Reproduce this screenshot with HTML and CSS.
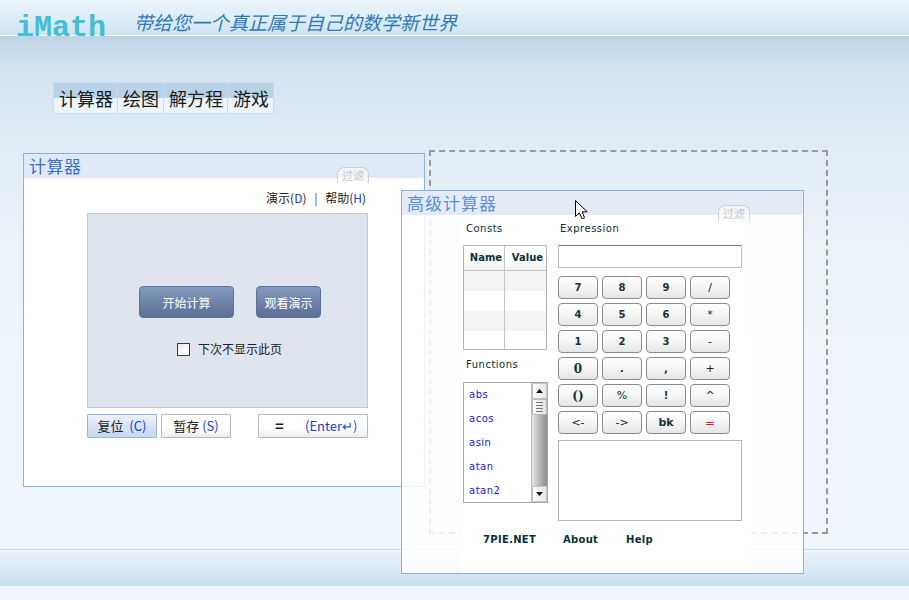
FILE: index.html
```html
<!DOCTYPE html>
<html lang="zh-CN">
<head>
<meta charset="utf-8">
<title>iMath</title>
<link rel="stylesheet" href="styles.css">
</head>
<body>
<header class="top">
  <span class="logo">iMath</span>
  <span class="tagline">带给您一个真正属于自己的数学新世界</span>
</header>
<main class="desk">
  <nav class="tabs">
    <a class="tab">计算器</a><a class="tab">绘图</a><a class="tab">解方程</a><a class="tab">游戏</a>
  </nav>

  <section class="win win-basic">
    <div class="win-title">计算器</div>
    <span class="filter">过滤</span>
    <div class="basic-body">
      <div class="links">演示(<span class="k">D</span>) <span class="sep">|</span> 帮助(<span class="k">H</span>)</div>
      <div class="panel">
        <div class="panel-btns">
          <button class="pbtn pbtn-wide">开始计算</button>
          <button class="pbtn pbtn-narrow">观看演示</button>
        </div>
        <label class="nomore"><span class="chk"></span>下次不显示此页</label>
      </div>
      <div class="basic-actions">
        <button class="abtn abtn-reset">复位 &nbsp;<span class="k">(C)</span></button>
        <button class="abtn">暂存 <span class="k">(S)</span></button>
        <button class="abtn abtn-eq"><b class="eq">=</b><span class="k">(Enter&#8629;)</span></button>
      </div>
    </div>
  </section>

  <div class="dashed"></div>

  <section class="win win-adv">
    <div class="win-title">高级计算器</div>
    <span class="filter">过滤</span>
    <div class="adv-panel">
      <div class="adv-cols">
        <div class="col-left">
          <div class="lbl">Consts</div>
          <div class="consts">
            <div class="crow chead"><span>Name</span><span>Value</span></div>
            <div class="crow alt"><span></span><span></span></div>
            <div class="crow"><span></span><span></span></div>
            <div class="crow alt"><span></span><span></span></div>
            <div class="crow"><span></span><span></span></div>
          </div>
          <div class="lbl lbl-fn">Functions</div>
          <div class="fnlist">
            <ul class="fns">
              <li>abs</li><li>acos</li><li>asin</li><li>atan</li><li>atan2</li>
            </ul>
            <div class="scroll">
              <div class="sb-btn"><svg width="7" height="4" viewBox="0 0 7 4"><path d="M0 4L3.5 0L7 4Z" fill="#111"/></svg></div>
              <div class="sb-track">
                <div class="sb-thumb"><i></i><i></i><i></i><i></i></div>
              </div>
              <div class="sb-btn"><svg width="7" height="4" viewBox="0 0 7 4"><path d="M0 0L3.5 4L7 0Z" fill="#111"/></svg></div>
            </div>
          </div>
        </div>
        <div class="col-right">
          <div class="lbl">Expression</div>
          <div class="expr"></div>
          <div class="keys">
            <button class="key">7</button><button class="key">8</button><button class="key">9</button><button class="key thin">/</button>
            <button class="key">4</button><button class="key">5</button><button class="key">6</button><button class="key thin">*</button>
            <button class="key">1</button><button class="key">2</button><button class="key">3</button><button class="key thin">-</button>
            <button class="key big">0</button><button class="key">.</button><button class="key">,</button><button class="key thin">+</button>
            <button class="key big">()</button><button class="key thin">%</button><button class="key">!</button><button class="key thin">^</button>
            <button class="key thin">&lt;-</button><button class="key thin">-&gt;</button><button class="key bk">bk</button><button class="key red">=</button>
          </div>
          <div class="output"></div>
        </div>
      </div>
      <div class="adv-links"><a class="l1">7PIE.NET</a><a class="l2">About</a><a>Help</a></div>
    </div>
  </section>

  <svg class="cursor" width="13" height="20" viewBox="0 0 13 20">
    <path d="M0.5 0.5 L0.5 16.5 L4.3 12.8 L7 18.8 L9.6 17.7 L7 11.8 L12.2 11.8 Z" fill="#fff" stroke="#000" stroke-width="1" stroke-linejoin="miter"/>
  </svg>
</main>
<footer class="bottom"></footer>
</body>
</html>
```

FILE: styles.css
```css
* { box-sizing: border-box; }
html, body { margin: 0; padding: 0; }
body {
  width: 909px;
  height: 600px;
  overflow: hidden;
  background: #eef5fc;
  font-family: "Noto Sans CJK SC", "Liberation Sans", sans-serif;
  color: #222;
}

/* header */
.top {
  height: 36px;
  display: flex;
  align-items: flex-start;
  background: linear-gradient(#ebf5fb 0%, #dcebf6 60%, #cfe2f1 100%);
  border-bottom: 1px solid #f6fafd;
}
.logo {
  margin: 13px 0 0 16px;
  font-family: "Liberation Mono", monospace;
  font-weight: bold;
  font-size: 30px;
  line-height: 30px;
  color: #42bfd1;
}
.tagline {
  margin: 11px 0 0 28px;
  font-style: italic;
  font-size: 19px;
  line-height: 21px;
  color: #2c7bbb;
}

/* desk */
.desk {
  position: relative;
  height: 513px;
  padding-top: 46px;
  background: linear-gradient(#bdd3e6 0px, #d3e3f0 30px, #e1ecf6 110px, #e9f1f9 200px, #edf4fb 320px, #eef5fc 513px);
}
.tabs {
  display: flex;
  margin-left: 53px;
  height: 32px;
}
.tab {
  display: block;
  height: 32px;
  padding: 0 4px 0 5px;
  border: 1px solid #c5dcec;
  border-left: none;
  background: linear-gradient(#b8d3e8 0%, #b8d3e8 50%, #ecf5fc 50%, #ecf5fc 100%);
  font-size: 18px;
  line-height: 30px;
  color: #1a1a1a;
}
.tab:first-child { border-left: 1px solid #c5dcec; }

/* windows */
.win {
  position: absolute;
  border: 1px solid #8bb1dc;
  display: flex;
  flex-direction: column;
}
.win-title {
  height: 24px;
  padding-left: 5px;
  font-size: 17px;
  line-height: 24px;
  color: #3b6fcd;
  background: #e0e9f6;
  letter-spacing: 0.5px;
}
.filter {
  position: absolute;
  width: 32px;
  height: 16px;
  border: 1px solid #cfcfcf;
  border-bottom: none;
  border-radius: 7px 7px 0 0;
  background: rgba(255, 255, 255, 0.55);
  font-size: 11px;
  line-height: 14px;
  text-align: center;
  color: #c6c6c6;
}

.win-basic {
  left: 23px;
  top: 117px;
  width: 402px;
  height: 334px;
  background: #fff;
  z-index: 1;
}
.win-basic .filter { left: 313px; top: 13px; }
.basic-body {
  padding: 12px 0 0 63px;
}
.links {
  width: 281px;
  height: 16px;
  margin-bottom: 7px;
  padding-right: 2px;
  text-align: right;
  font-size: 12px;
  line-height: 16px;
  color: #222;
}
.links .sep { margin: 0 5px; color: #555; }
.k { color: #1240d8; }
.panel {
  width: 281px;
  height: 195px;
  border: 1px solid #c8c8c8;
  background: #dfe5ee;
  padding: 72px 0 0 51px;
}
.panel-btns {
  display: flex;
  gap: 22px;
}
.pbtn {
  height: 32px;
  border: 1px solid #5d7297;
  border-radius: 4px;
  background: linear-gradient(#8398bd, #5b6f95);
  color: #fff;
  font-family: inherit;
  font-size: 12px;
  padding: 0;
}
.pbtn-wide { width: 95px; }
.pbtn-narrow { width: 65px; }
.nomore {
  display: flex;
  align-items: center;
  margin: 23px 0 0 38px;
  font-size: 12px;
  line-height: 16px;
  color: #222;
}
.chk {
  width: 13px;
  height: 13px;
  margin-right: 8px;
  border: 1px solid #2e3d55;
  background: linear-gradient(135deg, #e8e8e8, #fdfbf6 60%, #fff);
}
.basic-actions {
  display: flex;
  margin-top: 6px;
}
.abtn {
  height: 24px;
  width: 70px;
  margin-right: 4px;
  border: 1px solid #b9b9b9;
  border-radius: 1px;
  background: linear-gradient(#ffffff, #ffffff 60%, #ececec);
  font-family: inherit;
  font-size: 13px;
  line-height: 20px;
  color: #222;
  padding: 0;
}
.abtn-reset {
  border-color: #9cb6d9;
  background: linear-gradient(#edf2fb, #d4e1f4 60%, #c6d6ef);
}
.abtn-eq {
  width: 110px;
  margin-left: 23px;
  display: flex;
  align-items: center;
  padding-left: 16px;
}
.abtn-eq .eq { font-size: 15px; width: 30px; text-align: left; }

/* dashed rectangle */
.dashed {
  position: absolute;
  left: 429px;
  top: 114px;
  width: 399px;
  height: 384px;
  border: 2px dashed #9b9b9b;
  z-index: 2;
}

/* advanced window */
.win-adv {
  left: 401px;
  top: 154px;
  width: 403px;
  height: 384px;
  background: rgba(255, 255, 255, 0.84);
  z-index: 3;
}
.win-adv .win-title {
  background: rgba(224, 233, 246, 0.9);
  color: #5e8fd8;
  font-size: 17px;
  letter-spacing: 1px;
  padding-left: 5px;
}
.win-adv .filter { left: 316px; top: 14px; }
.adv-panel {
  margin-left: 59px;
  width: 290px;
  height: 357px;
  background: #fff;
  padding: 7px 0 0 2px;
  font-family: "DejaVu Sans", "Liberation Sans", sans-serif;
  font-size: 10px;
  color: #0c3038;
}
.adv-cols {
  display: flex;
  gap: 10px;
}
.col-left { width: 85px; }
.col-right { width: 184px; }
.lbl {
  height: 23px;
  padding-left: 3px;
  line-height: 13px;
  letter-spacing: 0.5px;
}
.col-right .lbl { padding-left: 2px; }
.lbl-fn {
  height: 32px;
  line-height: 30px;
  padding-top: 0;
}
.consts {
  width: 84px;
  border: 1px solid #b4b4b4;
}
.crow {
  display: grid;
  grid-template-columns: 41px 1fr;
  height: 20px;
}
.crow span { border-right: 1px solid #c4c4c4; }
.crow span:last-child { border-right: none; }
.crow.alt { background: #f4f4f4; }
.chead {
  height: 25px;
  border-bottom: 1px solid #c4c4c4;
  background: linear-gradient(#ffffff, #ffffff 60%, #efefef);
  font-weight: bold;
  line-height: 24px;
  text-align: center;
}
.chead span { padding-left: 4px; }
.crow:last-child { height: 18px; }

.fnlist {
  display: flex;
  width: 85px;
  height: 121px;
  border: 1px solid #ababab;
}
.fns {
  list-style: none;
  margin: 0;
  padding: 0 0 0 5px;
  flex: 1;
  overflow: hidden;
}
.fns li {
  height: 24px;
  line-height: 24px;
  color: #1414e6;
  letter-spacing: 0.5px;
}
.scroll {
  width: 16px;
  display: flex;
  flex-direction: column;
  border-left: 1px solid #bbb;
}
.sb-btn {
  height: 16px;
  display: flex;
  align-items: center;
  justify-content: center;
  background: linear-gradient(90deg, #fafafa, #e8e8e8);
  border: 1px solid #c4c4c4;
}
.sb-track {
  flex: 1;
  background: linear-gradient(90deg, #e6e6e6, #c0c0c0 40%, #8e8e8e 100%);
}
.sb-thumb {
  height: 16px;
  background: linear-gradient(90deg, #fdfdfd, #e4e4e4);
  border: 1px solid #b8b8b8;
  border-radius: 2px;
  display: flex;
  flex-direction: column;
  justify-content: center;
  gap: 2px;
  padding: 0 3px;
}
.sb-thumb i { display: block; height: 1px; background: #777; }

.expr {
  height: 23px;
  border: 1px solid #bdbdbd;
  border-top-color: #7a7a7a;
  background: #fff;
}
.keys {
  margin-top: 8px;
  display: grid;
  grid-template-columns: repeat(4, 40px);
  grid-auto-rows: 23px;
  gap: 4px;
}
.key {
  padding: 0;
  border: 1px solid #8a8a8a;
  border-radius: 4px;
  background: linear-gradient(#ffffff, #f6f6f6 45%, #e6e6e6);
  font-family: "DejaVu Sans", sans-serif;
  font-weight: bold;
  font-size: 10px;
  color: #17323a;
}
.key.thin { font-weight: normal; color: #222; font-size: 11px; }
.key.big { font-size: 12px; font-family: "DejaVu Serif", serif; }
.key.bk { font-size: 11px; }
.key.red { color: #e01010; font-weight: normal; font-size: 12px; }
.output {
  margin-top: 6px;
  height: 81px;
  border: 1px solid #b4b4b4;
  background: #fff;
}
.adv-links {
  display: flex;
  padding-left: 20px;
  margin-top: 12px;
  font-weight: bold;
  line-height: 13px;
  color: #0c3038;
  letter-spacing: 0.3px;
}
.adv-links a { display: block; }
.adv-links .l1 { width: 80px; }
.adv-links .l2 { width: 63px; }

.cursor {
  position: absolute;
  left: 575px;
  top: 164px;
  z-index: 5;
}

/* footer band */
.bottom {
  height: 51px;
  background: linear-gradient(#c3d9ea 0px, #c3d9ea 1px, #f6fafd 1px, #f6fafd 2px, #e7f1f9 3px, #dbeaf5 20px, #c7dfee 36px, #c7dfee 37px, #f6fafd 37px, #f6fafd 38px, #eef5fc 38px);
}
```
